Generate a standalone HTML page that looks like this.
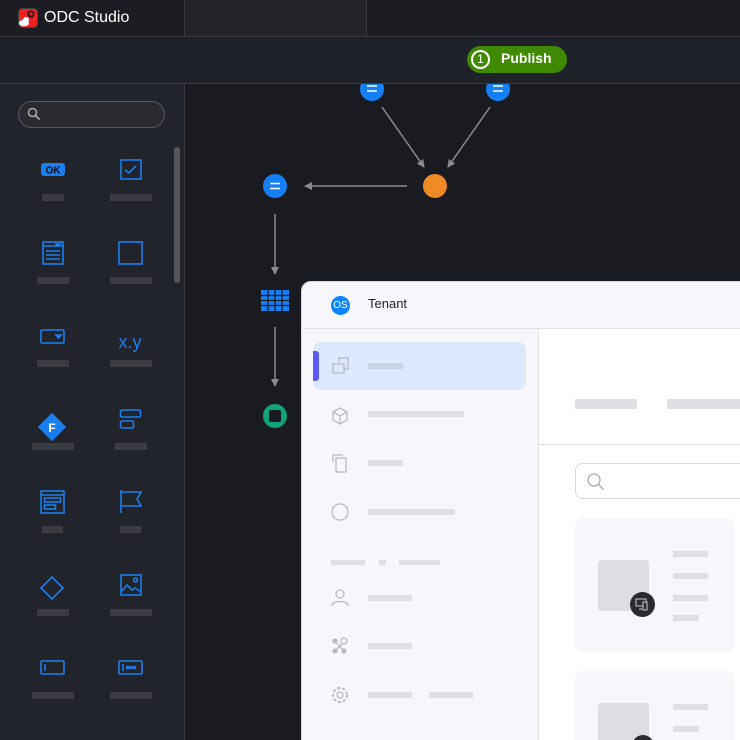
<!DOCTYPE html>
<html style="overflow:hidden;width:740px;height:740px"><head><style>
*{margin:0;padding:0;box-sizing:border-box}
body{width:740px;height:740px;overflow:hidden;background:#1a1b21;font-family:"Liberation Sans",sans-serif;position:relative}
.a{position:absolute}
.bar{position:absolute;background:#3b3c42;height:7px}
.lb{position:absolute;background:#e0dfe4}
</style></head><body>
<div class="a" style="left:0;top:0;width:740px;height:37px;background:#1c1d23;border-bottom:1px solid #393a40"></div>
<div class="a" style="left:184px;top:0;width:183px;height:37px;background:#22242a;border:1px solid #393a40;border-top:none"></div>
<svg class="a" style="left:18px;top:8px" width="20" height="20" viewBox="0 0 20 20"><rect x="0.5" y="0.5" width="19" height="19" rx="4" fill="#e22" stroke="#444"/><circle cx="13" cy="6" r="3.5" fill="#111"/><circle cx="13" cy="6" r="1.8" fill="#e22"/><ellipse cx="6" cy="15" rx="5" ry="3.3" fill="#fff"/><circle cx="8" cy="12" r="3" fill="#fff"/></svg>
<div class="a" style="left:44px;top:9px;color:#fff;font-size:16px">ODC Studio</div>
<div class="a" style="left:0;top:38px;width:740px;height:46px;background:#202229;border-bottom:1px solid #393a40"></div>
<div class="a" style="left:467px;top:46px;width:100px;height:27px;border-radius:14px;background:#3f8a00"></div>
<div class="a" style="left:471px;top:50px;width:19px;height:19px;border-radius:50%;border:2px solid #fff;color:#fff;font-size:12px;text-align:center;line-height:15px">1</div>
<div class="a" style="left:501px;top:50px;color:#fff;font-size:14px;font-weight:bold">Publish</div>
<div class="a" style="left:0;top:84px;width:185px;height:656px;background:#22242b;border-right:1px solid #393a40"></div>
<div class="a" style="left:18px;top:101px;width:147px;height:27px;border-radius:14px;background:#2a2b31;border:1.5px solid #5a5b60"></div>
<svg class="a" style="left:27px;top:107px" width="14" height="14" viewBox="0 0 14 14"><circle cx="5.5" cy="5.5" r="4" stroke="#aaa" stroke-width="1.5" fill="none"/><path d="M8.5 8.5L12.5 12.5" stroke="#aaa" stroke-width="1.6"/></svg>
<div class="a" style="left:174px;top:147px;width:6px;height:136px;border-radius:3px;background:#55565b"></div>
<svg class="a" style="left:0;top:150px" width="185" height="590" viewBox="0 150 185 590" fill="none" stroke="#1a7ef0" stroke-width="1.6">
<rect x="41" y="163" width="24" height="13" rx="3" fill="#1a7ef0" stroke="none"/><text x="53" y="173.5" fill="#111" stroke="none" font-size="10" font-weight="bold" text-anchor="middle" font-family="Liberation Sans">OK</text>
<rect x="121" y="160" width="20" height="19"/><path d="M125 170l4 3 7-7"/>
<rect x="43" y="242" width="20" height="22"/><path d="M43 246h20M46 251h14M46 255h14M46 259h14"/><path d="M56 244h4l-2 2z" fill="#1a7ef0"/>
<rect x="119" y="242" width="23" height="22"/>
<rect x="41" y="330" width="23" height="13" rx="1"/><path d="M56 335h5l-2.5 3z" fill="#1a7ef0"/>
<text x="130" y="348" fill="#1a7ef0" stroke="none" font-size="18" text-anchor="middle" font-family="Liberation Sans">x.y</text>
<path d="M52 414l13 13-13 13-13-13z" fill="#1a7ef0"/><text x="52" y="432" fill="#fff" stroke="none" font-size="12" font-weight="bold" text-anchor="middle" font-family="Liberation Sans">F</text>
<rect x="120.5" y="410" width="20" height="7" rx="1.5"/><rect x="120.5" y="421" width="13" height="7" rx="1.5"/>
<rect x="41" y="491" width="23" height="22"/><path d="M41 495h23"/><rect x="44.5" y="498" width="16" height="4"/><rect x="44.5" y="505" width="11" height="4"/>
<path d="M121 490v23M121 492h20l-4 7 4 7h-20"/>
<path d="M52 577l11 11-11 11-11-11z"/>
<rect x="121" y="575" width="20" height="20"/><path d="M121 592l6-7 5 5 3-2 6 4"/><circle cx="135.5" cy="580" r="2"/>
<rect x="41" y="661" width="23" height="13" rx="1"/><path d="M45 664v7"/>
<rect x="119" y="661" width="23" height="13" rx="1"/><path d="M123 664v7"/><circle cx="127.5" cy="667.5" r="1" fill="#1a7ef0"/><circle cx="131" cy="667.5" r="1" fill="#1a7ef0"/><circle cx="134.5" cy="667.5" r="1" fill="#1a7ef0"/>
</svg>
<div class="bar" style="left:42px;top:194px;width:22px"></div><div class="bar" style="left:110px;top:194px;width:42px"></div>
<div class="bar" style="left:37px;top:277px;width:32px"></div><div class="bar" style="left:110px;top:277px;width:42px"></div>
<div class="bar" style="left:37px;top:360px;width:32px"></div><div class="bar" style="left:110px;top:360px;width:42px"></div>
<div class="bar" style="left:32px;top:443px;width:42px"></div><div class="bar" style="left:115px;top:443px;width:32px"></div>
<div class="bar" style="left:42px;top:526px;width:21px"></div><div class="bar" style="left:120px;top:526px;width:21px"></div>
<div class="bar" style="left:37px;top:609px;width:32px"></div><div class="bar" style="left:110px;top:609px;width:42px"></div>
<div class="bar" style="left:32px;top:692px;width:42px"></div><div class="bar" style="left:110px;top:692px;width:42px"></div>
<svg class="a" style="left:185px;top:84px" width="555" height="656" viewBox="185 84 555 656">
<defs><marker id="m" markerWidth="8" markerHeight="8" refX="7" refY="4" orient="auto" markerUnits="userSpaceOnUse"><path d="M0 0L8 4L0 8z" fill="#8a8b90"/></marker></defs>
<g stroke="#8a8b90" stroke-width="1.5">
<line x1="382" y1="107" x2="424" y2="167" marker-end="url(#m)"/>
<line x1="490" y1="107" x2="448" y2="167" marker-end="url(#m)"/>
<line x1="407" y1="186" x2="305" y2="186" marker-end="url(#m)"/>
<line x1="275" y1="214" x2="275" y2="274" marker-end="url(#m)"/>
<line x1="275" y1="327" x2="275" y2="386" marker-end="url(#m)"/>
</g>
<g fill="#1580f5"><circle cx="372" cy="89" r="12"/><circle cx="498" cy="89" r="12"/><circle cx="275" cy="186" r="12"/></g>
<g stroke="#fff" stroke-width="1.6"><path d="M367 86h10M367 91h10M493 86h10M493 91h10M270 183.5h10M270 188.5h10"/></g>
<circle cx="435" cy="186" r="12" fill="#f08a24"/>
<g fill="#1580f5"><rect x="261" y="290" width="28" height="21"/></g>
<g stroke="#1a1b21" stroke-width="1.3"><path d="M261 295.5h28M261 300.5h28M261 305.5h28M268 290v21M275 290v21M282 290v21"/></g>
<circle cx="275" cy="416" r="12" fill="#11a37a"/><rect x="269" y="410" width="12" height="12" rx="2" fill="#1a1b21"/>
</svg>
<div class="a" style="left:0;top:0;width:740px;height:740px;overflow:hidden">
<div class="a" style="left:301px;top:281px;width:450px;height:470px;background:#f7f7fb;border-radius:10px 0 0 0;border:1px solid #d9d9df"></div>
<div class="a" style="left:302px;top:328px;width:438px;height:1px;background:#e2e2e8"></div>
<div class="a" style="left:331px;top:296px;width:19px;height:19px;border-radius:50%;background:#0a84ff;color:#fff;font-size:10px;text-align:center;line-height:19px">OS</div>
<div class="a" style="left:368px;top:296px;font-size:13px;color:#222">Tenant</div>
<div class="a" style="left:538px;top:329px;width:1px;height:411px;background:#e2e2e8"></div>
<div class="a" style="left:539px;top:329px;width:201px;height:411px;background:#fff"></div>
<div class="a" style="left:539px;top:444px;width:201px;height:1px;background:#e2e2e8"></div>
<div class="a" style="left:313px;top:342px;width:213px;height:48px;border-radius:8px;background:#dce9fd"></div>
<div class="a" style="left:313px;top:351px;width:6px;height:30px;border-radius:0 3px 3px 0;background:#5b5bf5"></div>
<svg class="a" style="left:328px;top:355px" width="240" height="360" viewBox="328 355 240 360" fill="none" stroke="#b9b8c8" stroke-width="1.3">
<path d="M339 362v-4h9v11h-4"/><rect x="333" y="364" width="11" height="9"/>
<path d="M340 408l7 4v8l-7 4-7-4v-8zM333 412l7 4 7-4M340 416v8"/>
<path d="M333 462v-7h10"/><rect x="336" y="458" width="10" height="14"/>
<circle cx="340" cy="512" r="8"/>
<circle cx="340" cy="594" r="4"/><path d="M332 606c0-6 16-6 16 0"/>
<circle cx="344" cy="641" r="3"/><circle cx="335" cy="641" r="2" fill="#b9b8c8"/><circle cx="335" cy="651" r="2" fill="#b9b8c8"/><circle cx="344" cy="651" r="2" fill="#b9b8c8"/><path d="M335 641l9 10M342 644l-7 7"/>
<circle cx="340" cy="695" r="3"/><circle cx="340" cy="695" r="7" stroke-dasharray="3 2" stroke-width="2"/>
</svg>
<div class="lb" style="left:368px;top:363px;width:35px;height:6px;background:#c9d4e6"></div>
<div class="lb" style="left:368px;top:411px;width:96px;height:6px"></div>
<div class="lb" style="left:368px;top:460px;width:35px;height:6px"></div>
<div class="lb" style="left:368px;top:509px;width:87px;height:6px"></div>
<div class="lb" style="left:331px;top:560px;width:34px;height:5px"></div>
<div class="lb" style="left:379px;top:560px;width:7px;height:5px"></div>
<div class="lb" style="left:399px;top:560px;width:41px;height:5px"></div>
<div class="lb" style="left:368px;top:595px;width:44px;height:6px"></div>
<div class="lb" style="left:368px;top:643px;width:44px;height:6px"></div>
<div class="lb" style="left:368px;top:692px;width:44px;height:6px"></div>
<div class="lb" style="left:429px;top:692px;width:44px;height:6px"></div>
<div class="lb" style="left:575px;top:399px;width:62px;height:10px"></div>
<div class="lb" style="left:667px;top:399px;width:80px;height:10px"></div>
<div class="a" style="left:575px;top:463px;width:180px;height:36px;border-radius:8px;border:1px solid #d8d8de;background:#fff"></div>
<svg class="a" style="left:586px;top:472px" width="20" height="20" viewBox="0 0 20 20"><circle cx="8" cy="8" r="6" stroke="#aaa" stroke-width="1.3" fill="none"/><path d="M12.5 12.5l5 5" stroke="#aaa" stroke-width="1.3"/></svg>
<div class="a" style="left:575px;top:518px;width:159px;height:134px;border-radius:8px;background:#f7f7fb"></div>
<div class="a" style="left:598px;top:560px;width:51px;height:51px;border-radius:4px;background:#dedde2"></div>
<div class="a" style="left:630px;top:592px;width:25px;height:25px;border-radius:50%;background:#2a2b31"></div>
<svg class="a" style="left:634px;top:596px" width="17" height="17" viewBox="0 0 17 17" fill="none" stroke="#ccc" stroke-width="1"><rect x="2" y="3" width="10" height="7"/><rect x="9" y="6" width="4" height="8" fill="#2a2b31"/><path d="M5 13h3"/></svg>
<div class="lb" style="left:673px;top:551px;width:35px;height:6px"></div>
<div class="lb" style="left:673px;top:573px;width:35px;height:6px"></div>
<div class="lb" style="left:673px;top:595px;width:35px;height:6px"></div>
<div class="lb" style="left:673px;top:615px;width:26px;height:6px"></div>
<div class="a" style="left:575px;top:671px;width:159px;height:80px;border-radius:8px;background:#f7f7fb"></div>
<div class="a" style="left:598px;top:703px;width:51px;height:40px;border-radius:4px;background:#dedde2"></div>
<div class="a" style="left:632px;top:735px;width:22px;height:22px;border-radius:50%;background:#2a2b31"></div>
<div class="lb" style="left:673px;top:704px;width:35px;height:6px"></div>
<div class="lb" style="left:673px;top:726px;width:26px;height:6px"></div>
</div>
</body></html>
